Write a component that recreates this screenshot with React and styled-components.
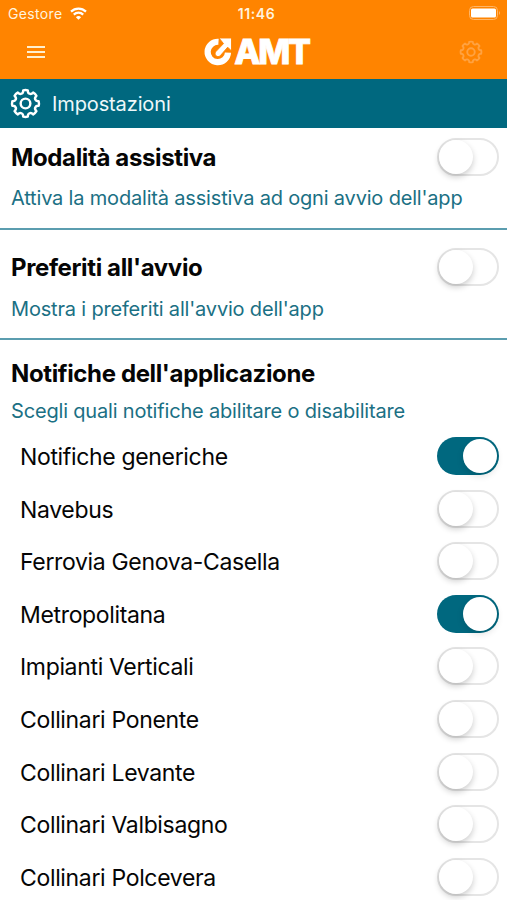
import React from 'react'
import styled, { createGlobalStyle } from 'styled-components'

const GlobalStyle = createGlobalStyle`
    *{
        box-sizing: border-box;
    }

    body{
        margin: 0;
        background: #fff;
        color: #050505;
        font-family: Inter, 'Liberation Sans', sans-serif;
    }

    h2, p, ul{
        margin: 0;
        padding: 0;
    }
`

const Screen = styled.main`
    width: 507px;
    height: 900px;
    overflow: hidden;
    background: #fff;
`

const TopBar = styled.header`
    height: 79px;
    background: #ff8400;
    color: #fff;
`

const StatusBar = styled.div`
    height: 28px;
    padding: 0 6px 2px 8px;
    display: grid;
    grid-template-columns: 1fr auto 1fr;
    align-items: center;
    font-size: 14px;
    color: #fff3de;
`

const Carrier = styled.div`
    display: flex;
    align-items: center;
    gap: 7px;
    letter-spacing: 0.35px;
`

const Clock = styled.span`
    padding-left: 4px;
    font-weight: 600;
    letter-spacing: 0.6px;
`

const BatteryIcon = styled.svg`
    justify-self: end;
`

const NavBar = styled.nav`
    height: 50px;
    padding: 0 24px 2px 27px;
    display: grid;
    grid-template-columns: 1fr auto 1fr;
    align-items: center;
`

const Logo = styled.div`
    padding-left: 3px;
    display: flex;
    align-items: center;
    gap: 2px;
`

const LogoText = styled.span`
    font-size: 34px;
    line-height: 30px;
    font-weight: 800;
    letter-spacing: -2.2px;
    -webkit-text-stroke: 0.8px #fff;
`

const Gear = styled.svg`
    justify-self: end;
    color: ${props => props.$dim ? '#ffa241' : '#fff'};
`

const TitleBar = styled.div`
    height: 49px;
    padding-left: 10px;
    display: flex;
    align-items: center;
    gap: 11px;
    background: #00687f;
    color: #eef8fa;
    font-size: 20px;
`

const TitleText = styled.span`
    padding-top: 1px;
    letter-spacing: -0.12px;
`

const Section = styled.section`
    height: ${props => props.$height};
    padding: ${props => props.$padding};
    border-bottom: ${props => props.$last ? 'none' : '2px solid #5b9daf'};
`

const SectionHead = styled.div`
    height: 38px;
    display: flex;
    justify-content: space-between;
    align-items: center;
`

const Heading = styled.h2`
    padding-top: 2px;
    font-size: 24px;
    line-height: 36px;
    font-weight: 700;
    letter-spacing: -0.37px;
`

const Description = styled.p`
    margin-top: ${props => props.$gap};
    font-size: 20px;
    line-height: 24px;
    color: #1b7084;
    letter-spacing: -0.18px;
`

const Options = styled.ul`
    margin-top: 7px;
    list-style: none;
`

const Option = styled.li`
    height: 52.55px;
    padding-left: 9px;
    display: flex;
    justify-content: space-between;
    align-items: center;
    font-size: 23px;
    letter-spacing: -0.34px;
`

const OptionLabel = styled.span`
    padding-top: 2px;
`

const Track = styled.button`
    width: 62px;
    height: 38px;
    padding: ${props => props.$on ? '2px' : '0'};
    border: ${props => props.$on ? 'none' : '2px solid #e5e5e5'};
    border-radius: 19px;
    display: flex;
    align-items: center;
    justify-content: ${props => props.$on ? 'flex-end' : 'flex-start'};
    background: ${props => props.$on ? '#00687f' : '#fff'};
`

const Thumb = styled.span`
    width: 34px;
    height: 34px;
    border-radius: 50%;
    background: #fff;
    box-shadow: ${props => props.$on ? '0 3px 7px rgba(0, 0, 0, 0.12)' : '0 3px 6px rgba(0, 0, 0, 0.2)'};
`

const notifications = [
    { label: 'Notifiche generiche', on: true },
    { label: 'Navebus', on: false },
    { label: 'Ferrovia Genova-Casella', on: false },
    { label: 'Metropolitana', on: true },
    { label: 'Impianti Verticali', on: false },
    { label: 'Collinari Ponente', on: false },
    { label: 'Collinari Levante', on: false },
    { label: 'Collinari Valbisagno', on: false },
    { label: 'Collinari Polcevera', on: false },
]

// eight flat teeth joined by rounded valleys
const gearPath = () => {
    const point = (r, deg) => {
        const a = deg * Math.PI / 180
        return `${(16 + r * Math.sin(a)).toFixed(2)} ${(16 - r * Math.cos(a)).toFixed(2)}`
    }
    let d = `M${point(13.8, -10)}`
    for (let i = 0; i < 8; i++) {
        const a = i * 45
        d += `Q${point(14.2, a)} ${point(13.8, a + 10)}`
        d += `C${point(10.2, a + 12)} ${point(10.2, a + 33)} ${point(13.8, a + 35)}`
    }
    return d + 'Z'
}

function GearIcon({ size, dim }) {
    return (
        <Gear $dim={dim} width={size} height={size} viewBox="0 0 32 32" fill="none" stroke="currentColor" strokeWidth="2.5" strokeLinejoin="round">
            <path d={gearPath()} />
            <circle cx="16" cy="16" r="5" />
        </Gear>
    )
}

function Switch({ on, label }) {
    return (
        <Track type="button" role="switch" aria-checked={on} aria-label={label} $on={on}>
            <Thumb $on={on} />
        </Track>
    )
}

export default function App() {
    return (
        <Screen>
            <GlobalStyle />
            <TopBar>
                <StatusBar>
                    <Carrier>
                        <span>Gestore</span>
                        <svg width="17" height="13" viewBox="0 0 17 13" fill="none" stroke="#fff" strokeWidth="2.2">
                            <path d="M1 4.6a10.7 10.7 0 0 1 15 0" />
                            <path d="M3.8 7.6a6.7 6.7 0 0 1 9.4 0" />
                            <path d="M8.5 12.8 5.9 10.2a3.7 3.7 0 0 1 5.2 0z" fill="#fff" stroke="none" />
                        </svg>
                    </Carrier>
                    <Clock>11:46</Clock>
                    <BatteryIcon width="32" height="14" viewBox="0 0 32 14">
                        <rect x="0.5" y="0.5" width="28" height="13" rx="4" fill="none" stroke="#ffb566" />
                        <rect x="2" y="2.5" width="25" height="9" rx="1.6" fill="#fff" />
                        <path d="M30 5q2 2 0 4z" fill="#ffb566" />
                    </BatteryIcon>
                </StatusBar>
                <NavBar>
                    <svg width="18" height="14" viewBox="0 0 18 14" stroke="#ffefcf" strokeWidth="2">
                        <path d="M0 2h18M0 7h18M0 12h18" />
                    </svg>
                    <Logo>
                        <svg width="28" height="28" viewBox="0 0 28 28" fill="none">
                            <path d="M14.5 3.8A10.2 10.2 0 1 0 24 14.6" stroke="#fff" strokeWidth="6.2" />
                            <path d="M15 0h12.5v13l-3.8-3.8-7.5 8.6c-3 2.5-6.8-1.2-4.3-4.2l7.6-8z" fill="#fff" stroke="#ff8400" strokeWidth="0.9" />
                        </svg>
                        <LogoText>AMT</LogoText>
                    </Logo>
                    <GearIcon size={24} dim />
                </NavBar>
            </TopBar>
            <TitleBar>
                <GearIcon size={31} />
                <TitleText>Impostazioni</TitleText>
            </TitleBar>
            <Section $height="102px" $padding="10px 8px 0 11px">
                <SectionHead>
                    <Heading>Modalità assistiva</Heading>
                    <Switch on={false} label="Modalità assistiva" />
                </SectionHead>
                <Description $gap="10px">Attiva la modalità assistiva ad ogni avvio dell'app</Description>
            </Section>
            <Section $height="110px" $padding="18px 8px 0 11px">
                <SectionHead>
                    <Heading>Preferiti all'avvio</Heading>
                    <Switch on={false} label="Preferiti all'avvio" />
                </SectionHead>
                <Description $gap="11px">Mostra i preferiti all'avvio dell'app</Description>
            </Section>
            <Section $last $height="auto" $padding="14px 8px 0 11px">
                <Heading>Notifiche dell'applicazione</Heading>
                <Description $gap="7px">Scegli quali notifiche abilitare o disabilitare</Description>
                <Options>
                    {notifications.map(item => (
                        <Option key={item.label}>
                            <OptionLabel>{item.label}</OptionLabel>
                            <Switch on={item.on} label={item.label} />
                        </Option>
                    ))}
                </Options>
            </Section>
        </Screen>
    )
}
